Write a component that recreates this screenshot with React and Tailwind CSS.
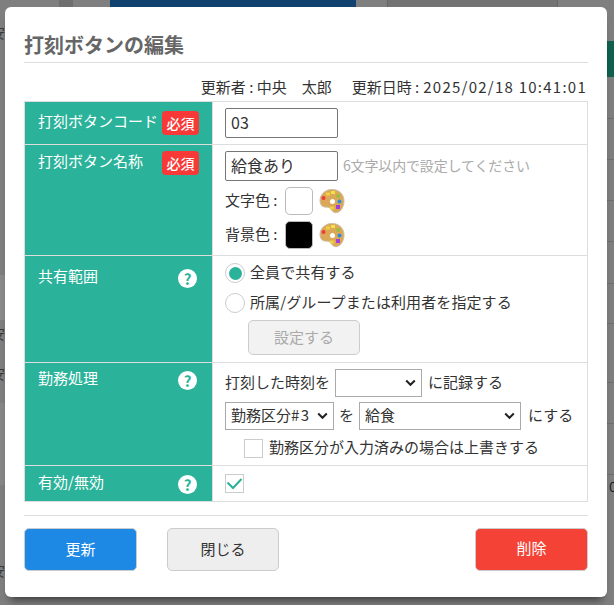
function Palette() {
  return (
    <svg width="26" height="26" viewBox="0 0 26 26" className="ml-[6px] shrink-0">
      <path d="M12 1.500C19 1 25 5.500 25 13c0 5-2.500 10.500-7 11.500-4 .8-4.500-1.500-6.500-4-1.500-1.800-4-1-6-1.500C2.500 18.500 1 16 1 12.500 1 6.500 6 2 12 1.500z" fill="#dba858" stroke="#cdbfa8" strokeWidth="1" />
      <circle cx="13.500" cy="13.500" r="2.500" fill="#ffffff" />
      <rect x="7" y="4.500" width="4" height="3" fill="#f0d040" />
      <rect x="12" y="3" width="4" height="3" fill="#f2e24a" />
      <rect x="17.500" y="6.500" width="3.500" height="3" fill="#90c040" />
      <circle cx="4.500" cy="10" r="2" fill="#ef3b3b" />
      <circle cx="20.500" cy="13.500" r="2" fill="#2a8fe0" />
      <rect x="17" y="17" width="4" height="4" fill="#a040d8" />
      <rect x="11" y="18.500" width="4" height="3" fill="#f0d040" />
    </svg>
  );
}

function Help() {
  return (
    <span className="flex size-[19px] items-center justify-center rounded-full bg-white text-[15px] font-bold leading-none text-[#2bb29a]">
      ?
    </span>
  );
}

function Required() {
  return (
    <span className="flex h-6 w-[37px] shrink-0 items-center justify-center rounded-[4px] bg-[#f93838] pb-px text-[14px] font-medium text-white">
      必須
    </span>
  );
}

function Chevron() {
  return (
    <svg width="11" height="8" viewBox="0 0 11 8" className="shrink-0">
      <path d="M1.200 1.500 5.500 5.800 9.800 1.500" fill="none" stroke="#222222" strokeWidth="2" />
    </svg>
  );
}

function Select({ label, className }) {
  return (
    <div className={`flex h-[28px] items-center justify-between border border-[#aaaaaa] bg-white px-[5px] ${className}`}>
      <span className="pb-[2px]">{label}</span>
      <Chevron />
    </div>
  );
}

function Row({ title, badge, help, height, headPad, bodyPad, children }) {
  return (
    <div className={`flex border-b border-[#dddddd] ${height}`}>
      <div className={`w-[187px] shrink-0 bg-[#2bb29a] pl-[13px] pr-[13px] text-white ${headPad}`}>
        <div className="flex h-6 items-center justify-between">
          <span className="pb-[4px]">{title}</span>
          {badge && <Required />}
          {help && <span className="mr-[2px]"><Help /></span>}
        </div>
      </div>
      <div className={`flex-1 border-l border-[#dddddd] pl-[12px] ${bodyPad}`}>{children}</div>
    </div>
  );
}

function Radio({ checked, label, className }) {
  return (
    <label className={`flex h-5 items-center gap-[5px] ${className}`}>
      <span className="flex size-5 items-center justify-center rounded-full border border-[#cccccc] bg-white">
        {checked && <span className="size-[13px] rounded-full bg-[#2bb29a]" />}
      </span>
      <span className="pb-[2px] tracking-[0.1px]">{label}</span>
    </label>
  );
}

function Backdrop() {
  const lines = ["top-[118px]", "top-[159px]", "top-[200px]", "top-[241px]", "top-[283px]", "top-[323px]", "top-[382px]", "top-[423px]", "top-[474px]"];
  const marks = ["top-[22px]", "top-[323px]", "top-[363px]", "top-[560px]"];
  return (
    <>
      <div className="absolute left-[59px] top-0 h-[8px] w-[14px] bg-[#6f6f6f]" />
      <div className="absolute left-[110px] top-0 h-[8px] w-[246px] bg-[#11426f]" />
      <div className="absolute left-[387px] top-0 h-[8px] w-[171px] border-x border-[#666666] bg-[#737373]" />
      <div className="absolute left-[607px] top-[41px] h-[36px] w-[7px] bg-[#11604f]" />
      {lines.map((top) => (
        <div key={top} className={`absolute left-[607px] h-px w-[7px] bg-[#6e6e6e] ${top}`} />
      ))}
      <div className="absolute left-0 top-[275px] h-[45px] w-[5px] bg-[#8a8a8a]" />
      <div className="absolute left-0 top-[403px] h-[82px] w-[5px] bg-[#878787]" />
      {marks.map((top) => (
        <span key={top} className={`absolute left-[-9px] text-[14px] text-[#3a3a3a] ${top}`}>
          安
        </span>
      ))}
      <span className="absolute left-[609px] top-[476px] text-[14px] text-[#1c2430]">0</span>
    </>
  );
}

export default function App() {
  return (
    <div className="relative h-[605px] w-[614px] overflow-hidden bg-[#7f7f7f] font-['Noto_Sans_CJK_JP',sans-serif] text-[15px] leading-[20px] text-[#333333]">
      <Backdrop />
      <div className="absolute left-[5px] top-[7px] h-[590px] w-[602px] rounded-[6px] bg-white px-[19px] shadow-[0_8px_8px_-5px_rgba(0,0,0,0.55)]">
        <h1 className="flex h-[56px] items-end border-b border-[#dddddd] pb-[3px] text-[20px] font-bold leading-[28px] text-[#666666]">
          打刻ボタンの編集
        </h1>
        <p className="flex h-[38px] items-center justify-end pr-px pt-[10px]">
          更新者 : 中央　太郎
          <span className="ml-[20px]">更新日時 :</span>
          <span className="ml-[4px] tracking-[1.250px]">2025/02/18 10:41:01</span>
        </p>
        <div className="border-x border-t border-[#dddddd]">
          <Row title="打刻ボタンコード" badge height="h-[43px]" headPad="pt-[9px]" bodyPad="pt-[6px]">
            <input
              defaultValue="03"
              className="h-[30px] w-[113px] rounded-[2px] border border-[#767676] px-[5px] pb-[2px] text-[16px] outline-none"
            />
          </Row>
          <Row title="打刻ボタン名称" badge height="h-[111px]" headPad="pt-[6px]" bodyPad="pt-[6px]">
            <div className="flex items-center gap-[5px]">
              <input
                defaultValue="給食あり"
                className="h-[30px] w-[113px] rounded-[2px] border border-[#767676] px-[5px] pb-[2px] text-[16px] outline-none"
              />
              <span className="pb-[2px] text-[14px] tracking-[-0.150px] text-[#aaaaaa]">6文字以内で設定してください</span>
            </div>
            <div className="mt-[6px] flex items-center">
              <span className="w-[60px] pb-[2px]">文字色 :</span>
              <span className="size-7 rounded-[5px] border border-[#bbbbbb] bg-white" />
              <Palette />
            </div>
            <div className="mt-[6px] flex items-center">
              <span className="w-[60px] pb-[2px]">背景色 :</span>
              <span className="size-7 rounded-[5px] border border-[#bbbbbb] bg-black" />
              <Palette />
            </div>
          </Row>
          <Row title="共有範囲" help height="h-[107px]" headPad="pt-[10px]" bodyPad="pt-[7px]">
            <Radio checked label="全員で共有する" />
            <Radio label="所属/グループまたは利用者を指定する" className="mt-[10px]" />
            <button className="ml-[23px] mt-[7px] h-[35px] w-[112px] rounded-[5px] border border-[#cccccc] bg-[#f2f2f2] pb-[2px] text-[#aaaaaa]">
              設定する
            </button>
          </Row>
          <Row title="勤務処理" help height="h-[103px]" headPad="pt-[5px]" bodyPad="pt-[6px]">
            <div className="flex items-center">
              <span className="w-[110px] pb-[3px]">打刻した時刻を</span>
              <Select className="w-[87px]" />
              <span className="ml-[6px] pb-[3px]">に記録する</span>
            </div>
            <div className="mt-[5px] flex items-center">
              <Select label={<>勤務区分<span className="tracking-[1.500px]">#3</span></>} className="w-[109px]" />
              <span className="w-[25px] pb-[2px] text-center">を</span>
              <Select label="給食" className="w-[162px]" />
              <span className="ml-[7px] pb-[2px]">にする</span>
            </div>
            <label className="ml-[19px] mt-[7px] flex items-center gap-[6px]">
              <span className="size-[19px] border border-[#cccccc] bg-white" />
              <span className="pb-[2px]">勤務区分が入力済みの場合は上書きする</span>
            </label>
          </Row>
          <Row title="有効/無効" help height="h-[36px]" headPad="pt-[6px]" bodyPad="pt-[8px]">
            <span className="flex size-[19px] items-center justify-center border border-[#cccccc] bg-white">
              <svg width="17" height="13" viewBox="0 0 17 13">
                <path d="M1.500 5.500 7 11 15.500 2" fill="none" stroke="#2bb29a" strokeWidth="2" />
              </svg>
            </span>
          </Row>
        </div>
        <div className="mt-[13px] flex justify-between border-t border-[#dddddd] pt-[12px]">
          <div className="flex gap-[30px]">
            <button className="h-[43px] w-[113px] rounded-[5px] border border-[#cccccc] bg-[#1e88e5] pb-[2px] text-white">更新</button>
            <button className="h-[43px] w-[112px] rounded-[5px] border border-[#cccccc] bg-[#eeeeee] pb-[2px]">閉じる</button>
          </div>
          <button className="h-[43px] w-[113px] rounded-[5px] border border-[#cccccc] bg-[#f44336] pb-[3px] text-white">削除</button>
        </div>
      </div>
    </div>
  );
}
